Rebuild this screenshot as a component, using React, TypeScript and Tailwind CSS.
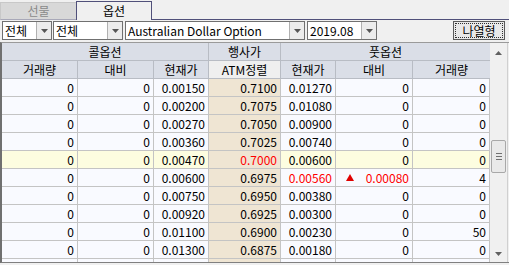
import React from "react";

type Row = { cv: string; cd: string; cp: string; k: string; pp: string; pd: string; pv: string; hi?: boolean; up?: boolean };

const rows: Row[] = [
  { cv: "0", cd: "0", cp: "0.00150", k: "0.7100", pp: "0.01270", pd: "0", pv: "0" },
  { cv: "0", cd: "0", cp: "0.00200", k: "0.7075", pp: "0.01080", pd: "0", pv: "0" },
  { cv: "0", cd: "0", cp: "0.00270", k: "0.7050", pp: "0.00900", pd: "0", pv: "0" },
  { cv: "0", cd: "0", cp: "0.00360", k: "0.7025", pp: "0.00740", pd: "0", pv: "0" },
  { cv: "0", cd: "0", cp: "0.00470", k: "0.7000", pp: "0.00600", pd: "0", pv: "0", hi: true },
  { cv: "0", cd: "0", cp: "0.00600", k: "0.6975", pp: "0.00560", pd: "0.00080", pv: "4", up: true },
  { cv: "0", cd: "0", cp: "0.00750", k: "0.6950", pp: "0.00380", pd: "0", pv: "0" },
  { cv: "0", cd: "0", cp: "0.00920", k: "0.6925", pp: "0.00300", pd: "0", pv: "0" },
  { cv: "0", cd: "0", cp: "0.01100", k: "0.6900", pp: "0.00230", pd: "0", pv: "50" },
  { cv: "0", cd: "0", cp: "0.01300", k: "0.6875", pp: "0.00180", pd: "0", pv: "0" },
];

function Arrow() {
  return (
    <svg width="7" height="4" viewBox="0 0 7 4">
      <path d="M0 0 H7 L3.5 4 Z" fill="#555" />
    </svg>
  );
}

function Combo({ text, w }: { text: string; w: string }) {
  return (
    <div className={`flex h-[19px] border border-[#707070] bg-white ${w}`}>
      <div className="flex-1 overflow-hidden whitespace-nowrap pl-[2px] leading-[17px] text-black">{text}</div>
      <div className="flex w-[15px] items-center justify-center border-l border-[#b0b0b0] bg-[#ececec]">
        <Arrow />
      </div>
    </div>
  );
}

const cell = "h-[18px] border-r border-b border-[#c4c4c4] leading-[17px] text-right pr-[3px] whitespace-nowrap overflow-hidden";

export default function App() {
  return (
    <div className="flex h-[265px] w-[509px] flex-col overflow-hidden bg-[#f0f0f0] text-[12px] text-black font-['Noto_Sans_CJK_KR',sans-serif]">
      {/* tabs */}
      <div className="flex h-[20px] items-end">
        <div className="flex h-[18px] w-[76px] items-center justify-center border-t border-l border-[#c8c8c8] border-b border-b-[#a8a8b8] bg-[#d8d8d8] text-[#8a8a8a]">
          선물
        </div>
        <div className="flex h-[19px] w-[76px] items-center justify-center border-t border-l border-r border-[#50507a] bg-[#f0f0f0] text-black">
          옵션
        </div>
        <div className="h-[20px] flex-1 border-b border-[#50507a]" />
      </div>

      {/* toolbar */}
      <div className="flex h-[22px] items-start pt-[1px] pl-[2px]">
        <Combo text="전체" w="w-[50px]" />
        <div className="w-[1px]" />
        <Combo text="전체" w="w-[70px]" />
        <div className="w-[2px]" />
        <Combo text="Australian Dollar Option" w="w-[180px]" />
        <div className="w-[2px]" />
        <Combo text="2019.08" w="w-[70px]" />
        <div className="ml-auto mr-[4px] flex h-[19px] w-[52px] border border-[#5a5a5a] bg-[#e8e8e8] p-[1px]">
          <div className="flex flex-1 items-center justify-center border border-dotted border-[#303030] text-[12px] leading-[15px]">
            나열형
          </div>
        </div>
      </div>

      {/* grid */}
      <div className="flex h-[221px] border-t border-[#9a9a9a] border-l-2 border-l-[#707070] border-b border-b-[#808080]">
        <div className="w-[488px] overflow-hidden bg-[#f9faff]">
          <div className="grid grid-cols-[76px_76px_55px_72px_55px_77px_77px]">
            {/* header row 1 */}
            <div className="col-span-3 h-[18px] border-r border-b border-[#b8bcc4] bg-[#dadee7] text-center leading-[17px]">콜옵션</div>
            <div className="h-[18px] border-r border-b border-[#b8bcc4] bg-[#dadee7] text-center leading-[17px]">행사가</div>
            <div className="col-span-3 h-[18px] border-b border-[#b8bcc4] bg-[#dadee7] text-center leading-[17px]">풋옵션</div>
            {/* header row 2 */}
            <div className="h-[18px] border-r border-b border-[#b8bcc4] bg-[#dadee7] text-center leading-[17px]">거래량</div>
            <div className="h-[18px] border-r border-b border-[#b8bcc4] bg-[#dadee7] text-center leading-[17px]">대비</div>
            <div className="h-[18px] border-r border-b border-[#b8bcc4] bg-[#dadee7] text-center leading-[17px]">현재가</div>
            <div className="h-[18px] border-r border-b border-[#b8bcc4] bg-[#efefef] text-center leading-[17px]">ATM정렬</div>
            <div className="h-[18px] border-r border-b border-[#b8bcc4] bg-[#dadee7] text-center leading-[17px]">현재가</div>
            <div className="h-[18px] border-r border-b border-[#b8bcc4] bg-[#dadee7] text-center leading-[17px]">대비</div>
            <div className="h-[18px] border-b border-[#b8bcc4] bg-[#dadee7] text-center leading-[17px]">거래량</div>

            {rows.map((r, i) => {
              const bg = r.hi ? "bg-[#fdfde0]" : "bg-[#f9faff]";
              return (
                <React.Fragment key={i}>
                  <div className={`${cell} ${bg}`}>{r.cv}</div>
                  <div className={`${cell} ${bg}`}>{r.cd}</div>
                  <div className={`${cell} ${bg}`}>{r.cp}</div>
                  <div className={`${cell} bg-[#efe5d3] ${r.hi ? "text-[#ff0000]" : ""}`}>{r.k}</div>
                  <div className={`${cell} ${bg} ${r.up ? "text-[#ff0000]" : ""}`}>{r.pp}</div>
                  {r.up ? (
                    <div className={`${cell} ${bg} flex items-center justify-between pl-[10px] text-[#ff0000]`}>
                      <svg width="8" height="7" viewBox="0 0 8 7">
                        <path d="M4 0 L8 7 H0 Z" fill="#e00000" />
                      </svg>
                      <span>{r.pd}</span>
                    </div>
                  ) : (
                    <div className={`${cell} ${bg}`}>{r.pd}</div>
                  )}
                  <div className={`${cell} ${bg}`}>{r.pv}</div>
                </React.Fragment>
              );
            })}
            {/* partial row */}
            <div className={`${cell} bg-[#f9faff]`} />
            <div className={`${cell} bg-[#f9faff]`} />
            <div className={`${cell} bg-[#f9faff]`} />
            <div className={`${cell} bg-[#efe5d3]`} />
            <div className={`${cell} bg-[#f9faff]`} />
            <div className={`${cell} bg-[#f9faff]`} />
            <div className={`${cell} bg-[#f9faff]`} />
          </div>
        </div>

        {/* scrollbar */}
        <div className="flex w-[17px] flex-col bg-[#f0f0f0]">
          <div className="flex h-[17px] items-center justify-center pt-[2px]">
            <svg width="7" height="4" viewBox="0 0 7 4">
              <path d="M3.5 0 L7 4 H0 Z" fill="#606060" />
            </svg>
          </div>
          <div className="h-[80px]" />
          <div className="mx-[1px] flex h-[33px] flex-col items-center justify-center gap-[2px] rounded-[2px] border border-[#a8a8a8] bg-[#e9e9e9]">
            <div className="h-px w-[6px] bg-[#707070]" />
            <div className="h-px w-[6px] bg-[#707070]" />
            <div className="h-px w-[6px] bg-[#707070]" />
          </div>
          <div className="flex-1" />
          <div className="flex h-[17px] items-center justify-center">
            <svg width="7" height="4" viewBox="0 0 7 4">
              <path d="M0 0 H7 L3.5 4 Z" fill="#606060" />
            </svg>
          </div>
        </div>
        <div className="w-[2px] border-l border-[#d0d0d0]" />
      </div>
    </div>
  );
}
